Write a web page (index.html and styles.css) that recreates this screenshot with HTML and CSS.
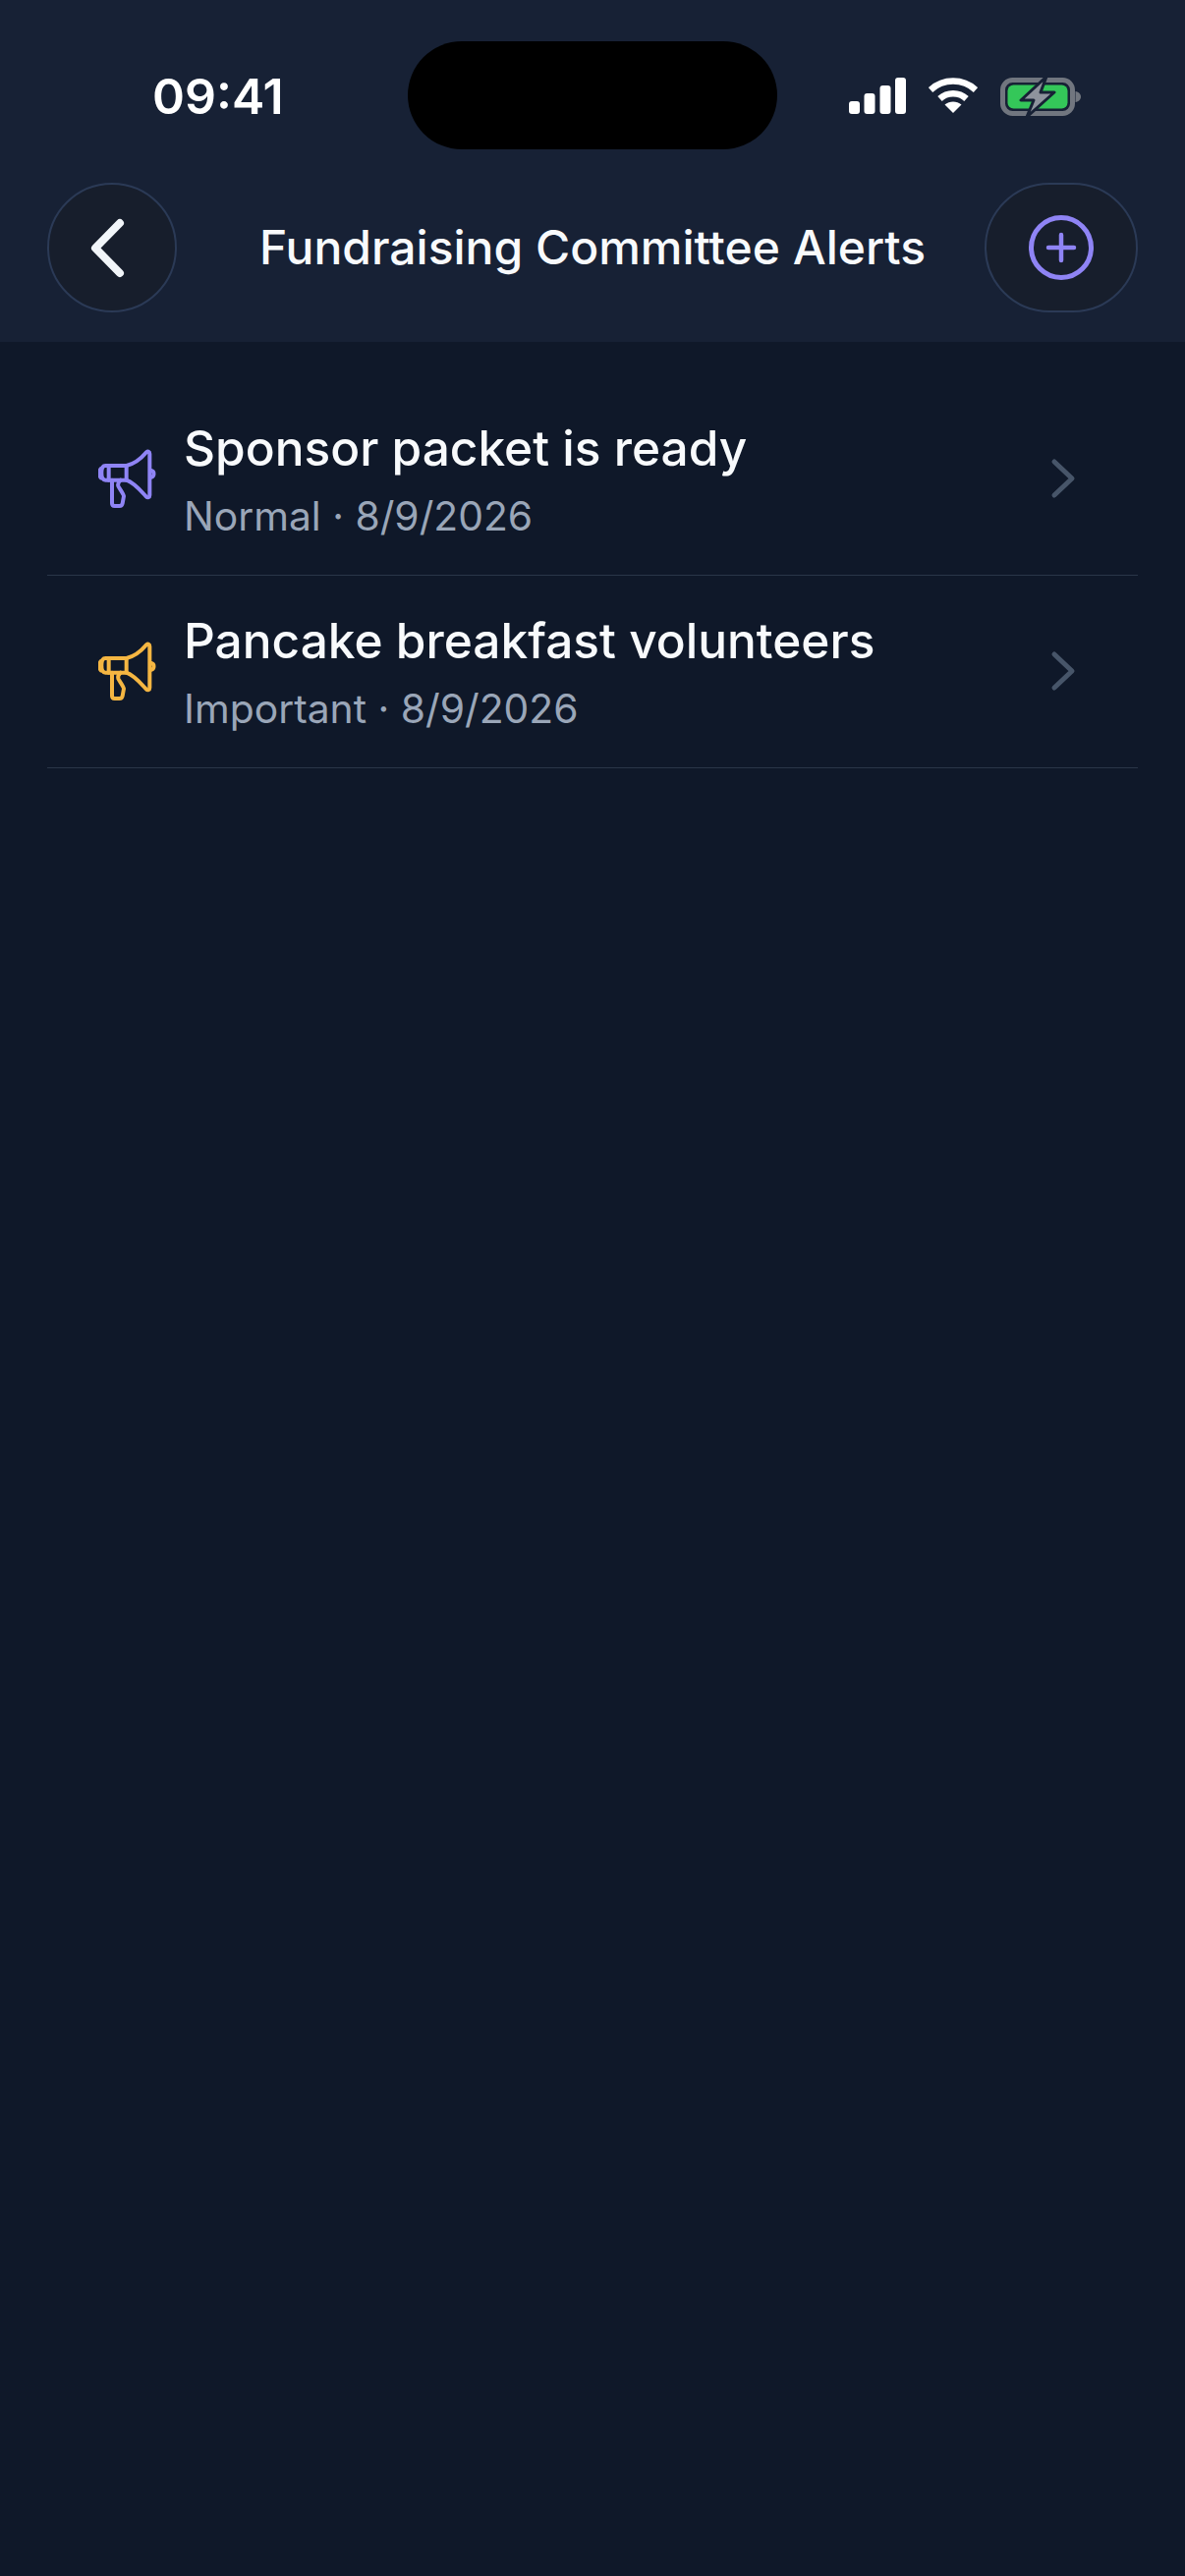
FILE: index.html
```html
<!DOCTYPE html>
<html lang="en">
<head>
<meta charset="utf-8">
<title>Fundraising Committee Alerts</title>
<link rel="stylesheet" href="styles.css">
</head>
<body>
<div class="screen">
  <header class="header">
    <div class="statusbar">
      <span class="time">09:41</span>
      <div class="island"></div>
      <div class="status-icons">
        <svg class="signal" width="58" height="37" viewBox="0 0 58 37"><rect x="0" y="24" width="11" height="13" rx="3"/><rect x="15.500" y="16" width="11" height="21" rx="3"/><rect x="31.500" y="8" width="11" height="29" rx="3"/><rect x="47" y="0" width="11" height="37" rx="3"/></svg>
        <svg class="wifi" width="50" height="36" viewBox="0 0 50 36"><path d="M2 12.500C15 0.500 35 0.500 48 12.500" /><path d="M11.500 21.500C19 14.500 31 14.500 38.500 21.500"/><path class="wifi-dot" d="M25 36L16.500 27.500C21.500 23.500 28.500 23.500 33.500 27.500Z"/></svg>
        <svg class="battery" width="84" height="41" viewBox="0 0 84 41">
          <rect class="batt-shell" x="2.500" y="3.500" width="71" height="34" rx="10"/>
          <rect class="batt-fill" x="7.500" y="8.500" width="61" height="24" rx="6"/>
          <path class="batt-nub" d="M76.500 15C80 15.500 82 18 82 20.500C82 23 80 25.500 76.500 26Z"/>
          <path class="batt-bolt" d="M47 0L21 24H34L27 41L55 16H41Z"/>
        </svg>
      </div>
    </div>
    <nav class="navbar">
      <button class="nav-btn nav-back" aria-label="Back">
        <svg width="44" height="68" viewBox="0 0 44 68"><path d="M35 9L10 34.500L35 60"/></svg>
      </button>
      <h1 class="nav-title">Fundraising Committee Alerts</h1>
      <button class="nav-btn nav-add" aria-label="Add">
        <svg width="68" height="68" viewBox="0 0 68 68"><circle cx="34" cy="34" r="30.500"/><path d="M34 21V47M21 34H47"/></svg>
      </button>
    </nav>
  </header>
  <main class="list">
    <a class="row">
      <svg class="horn horn-normal" width="60" height="62" viewBox="60 52 180 186"><use href="#megaphone"/></svg>
      <div class="row-text">
        <div class="row-title">Sponsor packet is ready</div>
        <div class="row-sub">Normal · 8/9/2026</div>
      </div>
      <svg class="chev" width="26" height="42" viewBox="0 0 26 42"><path d="M4 4L22 21L4 38"/></svg>
    </a>
    <a class="row">
      <svg class="horn horn-important" width="60" height="62" viewBox="60 52 180 186"><use href="#megaphone"/></svg>
      <div class="row-text">
        <div class="row-title">Pancake breakfast volunteers</div>
        <div class="row-sub">Important · 8/9/2026</div>
      </div>
      <svg class="chev" width="26" height="42" viewBox="0 0 26 42"><path d="M4 4L22 21L4 38"/></svg>
    </a>
  </main>
  <svg class="defs" width="0" height="0">
    <defs>
      <g id="megaphone">
        <path d="M146 103C170 98 192 80 207 62C212 58 217 60 217 67V193C217 200 211 202 206 197C190 180 170 155 146 147H82C74 147 70 140 70 125C70 110 74 103 82 103Z"/>
        <path d="M92 103V147M146 103V147"/>
        <path d="M102 147V218C102 223 105 226 110 226H125C130 226 133 223 134 218L138 196C138 190 124 172 121 165C119 158 122 152 128 147"/>
        <path d="M68 112C62 120 62 132 68 140"/>
        <path d="M222 118C232 120 232 136 222 138"/>
      </g>
    </defs>
  </svg>
</div>
</body>
</html>
```

FILE: styles.css
```css
* { box-sizing: border-box; }

html, body {
  margin: 0;
  padding: 0;
  background: #0f1829;
}

.screen {
  position: relative;
  width: 1206px;
  height: 2622px;
  background: #0f1829;
  font-family: Inter, "Liberation Sans", sans-serif;
  overflow: hidden;
}

.header {
  height: 348px;
  background: #172135;
  padding: 0 48px;
}

.statusbar {
  position: relative;
  height: 186px;
  display: flex;
  align-items: flex-start;
  justify-content: space-between;
}

.time {
  margin: 69px 0 0 107px;
  font-size: 50px;
  line-height: 58px;
  font-weight: 600;
  color: #ffffff;
}

.island {
  position: absolute;
  left: 367px;
  top: 42px;
  width: 376px;
  height: 110px;
  border-radius: 55px;
  background: #000000;
}

.status-icons {
  display: flex;
  align-items: flex-start;
  gap: 23px;
  margin: 78px 56px 0 0;
}

.signal { fill: #ffffff; margin-top: 1px; }

.wifi { margin-top: 1px; }
.wifi path { fill: none; stroke: #ffffff; stroke-width: 6.500px; stroke-linejoin: round; }
.wifi .wifi-dot { fill: #ffffff; stroke: none; }

.batt-shell { fill: none; stroke: #71767f; stroke-width: 5px; }
.batt-fill { fill: #34c759; }
.batt-nub { fill: #71767f; }
.batt-bolt { fill: #8e939d; stroke: #172135; stroke-width: 3px; stroke-linejoin: round; }

.navbar {
  display: flex;
  align-items: center;
  justify-content: space-between;
  height: 132px;
}

.nav-btn {
  display: flex;
  align-items: center;
  justify-content: center;
  height: 132px;
  padding: 0;
  background: #171e2c;
  border: 2px solid #2b3a56;
  border-radius: 66px;
}

.nav-back { width: 132px; }
.nav-add { width: 156px; }

.nav-back svg { margin-right: 11px; }
.nav-back path {
  fill: none;
  stroke: #f1f5f9;
  stroke-width: 8px;
  stroke-linecap: round;
  stroke-linejoin: round;
}

.nav-add circle,
.nav-add path {
  fill: none;
  stroke: #8f84f5;
  stroke-width: 5px;
  stroke-linecap: round;
}

.nav-add path { stroke-width: 4.500px; }

.nav-title {
  margin: 0 0 0 24px;
  font-size: 48px;
  line-height: 56px;
  font-weight: 500;
  color: #f8fafc;
  white-space: nowrap;
}

.list {
  padding: 42px 48px 0;
}

.row {
  display: flex;
  align-items: center;
  height: 196px;
  padding: 0 63px 0 52px;
  border-bottom: 1.500px solid #2a3648;
}

.horn {
  flex: none;
  margin-right: 27px;
  fill: none;
  stroke-width: 12px;
  stroke-linecap: round;
  stroke-linejoin: round;
}
.horn-normal { stroke: #8f84f5; }
.horn-important { stroke: #f5b642; }

.row-text { flex: 1; min-width: 0; }

.row-title {
  font-size: 49.600px;
  line-height: 60px;
  font-weight: 500;
  color: #f8fafc;
  white-space: nowrap;
}

.row-sub {
  margin-top: 14px;
  font-size: 40.800px;
  line-height: 50px;
  font-weight: 400;
  color: #9aa6b8;
  white-space: nowrap;
}

.chev { flex: none; margin-bottom: 2px; }
.chev path {
  fill: none;
  stroke: #475569;
  stroke-width: 5px;
  stroke-linecap: round;
  stroke-linejoin: round;
}

.defs { position: absolute; }
```
